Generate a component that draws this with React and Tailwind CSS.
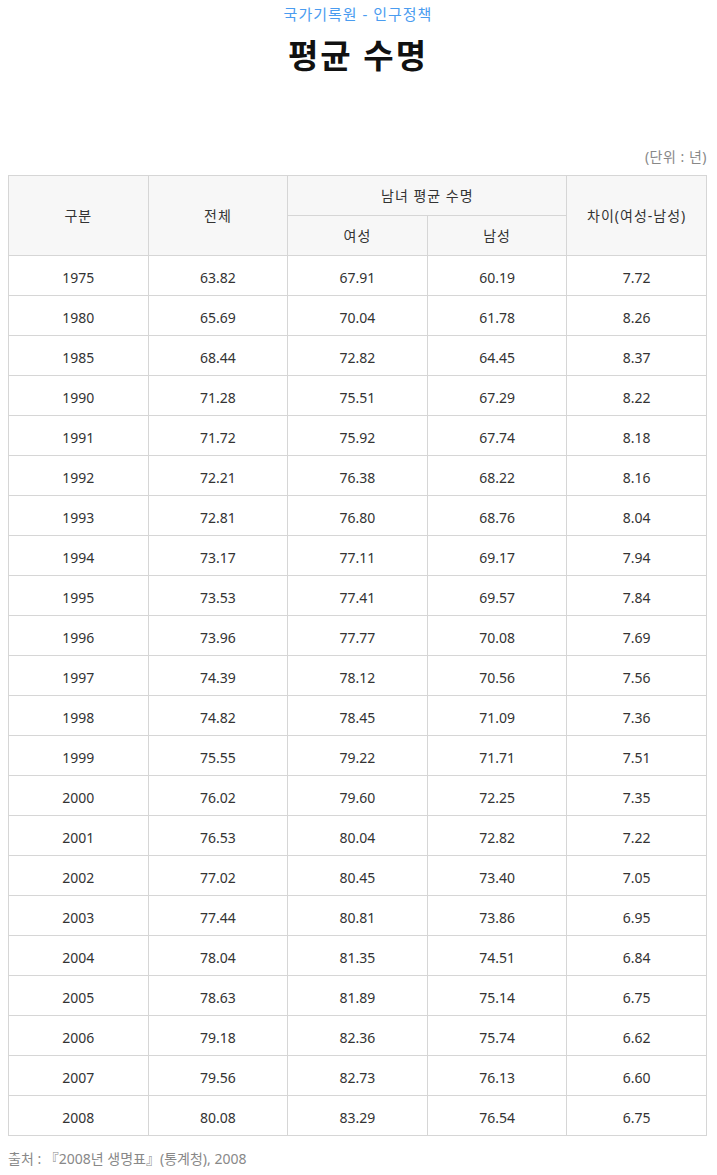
const rows = [
  ['1975', '63.82', '67.91', '60.19', '7.72'],
  ['1980', '65.69', '70.04', '61.78', '8.26'],
  ['1985', '68.44', '72.82', '64.45', '8.37'],
  ['1990', '71.28', '75.51', '67.29', '8.22'],
  ['1991', '71.72', '75.92', '67.74', '8.18'],
  ['1992', '72.21', '76.38', '68.22', '8.16'],
  ['1993', '72.81', '76.80', '68.76', '8.04'],
  ['1994', '73.17', '77.11', '69.17', '7.94'],
  ['1995', '73.53', '77.41', '69.57', '7.84'],
  ['1996', '73.96', '77.77', '70.08', '7.69'],
  ['1997', '74.39', '78.12', '70.56', '7.56'],
  ['1998', '74.82', '78.45', '71.09', '7.36'],
  ['1999', '75.55', '79.22', '71.71', '7.51'],
  ['2000', '76.02', '79.60', '72.25', '7.35'],
  ['2001', '76.53', '80.04', '72.82', '7.22'],
  ['2002', '77.02', '80.45', '73.40', '7.05'],
  ['2003', '77.44', '80.81', '73.86', '6.95'],
  ['2004', '78.04', '81.35', '74.51', '6.84'],
  ['2005', '78.63', '81.89', '75.14', '6.75'],
  ['2006', '79.18', '82.36', '75.74', '6.62'],
  ['2007', '79.56', '82.73', '76.13', '6.60'],
  ['2008', '80.08', '83.29', '76.54', '6.75'],
]

export default function App() {
  return (
    <div className="min-h-screen bg-white font-['Noto_Sans','Noto_Sans_CJK_KR',sans-serif] text-[#333]">
      <div className="w-[700px] ml-2">
        {/* Title */}
        <p className="pt-1 text-center text-[15px] leading-5 tracking-[1px] text-[#4a9cf0]">국가기록원 - 인구정책</p>
        <h1 className="mt-3 text-center text-[33px] leading-10 tracking-[2px] font-bold text-[#111]">평균 수명</h1>

        <p className="mt-[71px] pr-[1px] text-right text-[14px] leading-5 tracking-[0.5px] text-[#888]">(단위 : 년)</p>

        {/* Table */}
        <table className="mt-2 w-[699px] table-fixed border-collapse text-[14px] text-center">
          <thead>
            <tr className="h-10 bg-[#f7f7f7] tracking-[1px]">
              <th rowSpan={2} className="border border-[#d6d6d6] font-normal">구분</th>
              <th rowSpan={2} className="border border-[#d6d6d6] font-normal">전체</th>
              <th colSpan={2} className="border border-[#d6d6d6] font-normal">남녀 평균 수명</th>
              <th rowSpan={2} className="border border-[#d6d6d6] font-normal">차이(여성-남성)</th>
            </tr>
            <tr className="h-10 bg-[#f7f7f7] tracking-[1px]">
              <th className="border border-[#d6d6d6] font-normal">여성</th>
              <th className="border border-[#d6d6d6] font-normal">남성</th>
            </tr>
          </thead>
          <tbody>
            {rows.map((r) => (
              <tr key={r[0]} className="h-10">
                {r.map((c, i) => (
                  <td key={i} className="border border-[#d6d6d6] pt-[3px]">{c}</td>
                ))}
              </tr>
            ))}
          </tbody>
        </table>

        <p className="mt-[13px] text-[14px] leading-5 text-[#888]">출처 : 『2008년 생명표』(통계청), 2008</p>
      </div>
    </div>
  )
}
